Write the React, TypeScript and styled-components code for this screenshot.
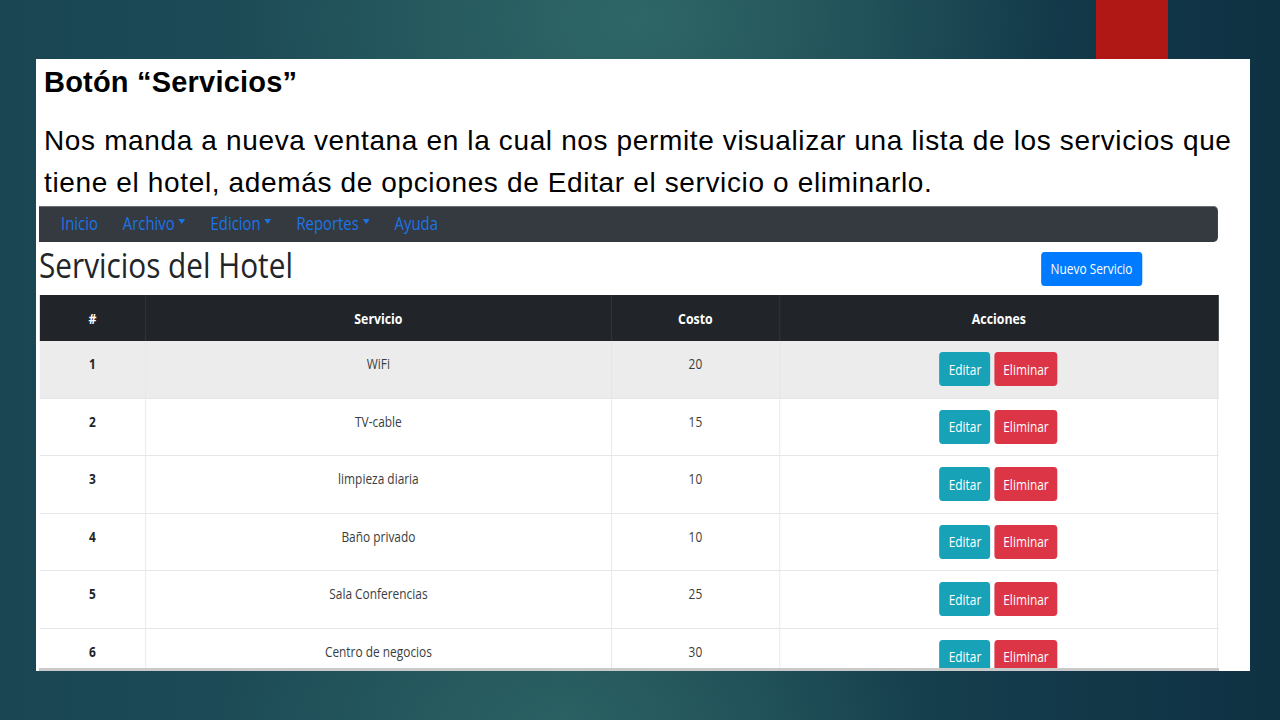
import React from 'react';
import styled, { createGlobalStyle } from 'styled-components';

const GlobalStyle = createGlobalStyle`
  html, body {
    margin: 0;
    padding: 0;
    width: 1280px;
    height: 720px;
    overflow: hidden;
  }
  * {
    box-sizing: border-box;
  }
`;

// the embedded capture is squeezed horizontally in the slide
const SQUEEZE = 0.85;
const sx = (v: number) => `${(v / SQUEEZE).toFixed(2)}px`;

interface Servicio {
  id: number;
  nombre: string;
  costo: number;
}

const servicios: Servicio[] = [
  { id: 1, nombre: 'WiFi', costo: 20 },
  { id: 2, nombre: 'TV-cable', costo: 15 },
  { id: 3, nombre: 'limpieza diaria', costo: 10 },
  { id: 4, nombre: 'Baño privado', costo: 10 },
  { id: 5, nombre: 'Sala Conferencias', costo: 25 },
  { id: 6, nombre: 'Centro de negocios', costo: 30 }
];

const navItems = [
  { label: 'Inicio', dropdown: false },
  { label: 'Archivo', dropdown: true },
  { label: 'Edicion', dropdown: true },
  { label: 'Reportes', dropdown: true },
  { label: 'Ayuda', dropdown: false }
];

const App: React.FC = () => {
  return (
    <Slide>
      <GlobalStyle />
      <RedAccent />
      <Panel>
        <SlideText>
          <SlideHeading>Botón “Servicios”</SlideHeading>
          <SlideParagraph>
            Nos manda a nueva ventana en la cual nos permite visualizar una lista de los servicios que
            <br />
            tiene el hotel, además de opciones de Editar el servicio o eliminarlo.
          </SlideParagraph>
        </SlideText>

        <Capture>
          <Page>
            <Navbar>
              {navItems.map(item => (
                <NavLink key={item.label}>
                  {item.label}
                  {item.dropdown && <Caret />}
                </NavLink>
              ))}
            </Navbar>

            <TitleRow>
              <PageTitle>Servicios del Hotel</PageTitle>
              <PrimaryButton>Nuevo Servicio</PrimaryButton>
            </TitleRow>

            <Table>
              <HeadRow>
                <HeadCell>#</HeadCell>
                <HeadCell>Servicio</HeadCell>
                <HeadCell>Costo</HeadCell>
                <HeadCell>Acciones</HeadCell>
              </HeadRow>
              {servicios.map((s, i) => (
                <BodyRow key={s.id} highlighted={i === 0}>
                  <Cell bold>{s.id}</Cell>
                  <Cell>{s.nombre}</Cell>
                  <Cell>{s.costo}</Cell>
                  <ActionCell>
                    <ActionButton variant="info">Editar</ActionButton>
                    <ActionButton variant="danger">Eliminar</ActionButton>
                  </ActionCell>
                </BodyRow>
              ))}
            </Table>
          </Page>
        </Capture>
      </Panel>
    </Slide>
  );
};

export default App;

const Slide = styled.div`
  position: relative;
  width: 1280px;
  height: 720px;
  padding: 59px 30px 0 36px;
  background-color: #16404e;
  background-image: radial-gradient(ellipse 420px 260px at 640px 20px, rgba(52, 110, 108, 0.75), rgba(52, 110, 108, 0) 100%),
    radial-gradient(ellipse 360px 160px at 560px 720px, rgba(48, 104, 104, 0.7), rgba(48, 104, 104, 0) 100%),
    linear-gradient(90deg, #1a4654 0%, #1f5058 45%, #133a4a 80%, #0f3243 100%);
`;

const RedAccent = styled.div`
  position: absolute;
  top: 0;
  left: 1096px;
  width: 72px;
  height: 59px;
  background: #b01816;
`;

const Panel = styled.div`
  width: 1214px;
  height: 612px;
  background: #ffffff;
  display: flex;
  flex-direction: column;
  overflow: hidden;
`;

const SlideText = styled.div`
  padding: 6px 0 0 8px;
  font-family: 'Liberation Sans', Arial, sans-serif;
  color: #000000;
  white-space: nowrap;
`;

const SlideHeading = styled.div`
  font-size: 29px;
  font-weight: bold;
  line-height: 34px;
  letter-spacing: 0.2px;
  margin-bottom: 21px;
`;

const SlideParagraph = styled.div`
  font-size: 28px;
  line-height: 42px;
  letter-spacing: 0.64px;
`;

const Capture = styled.div`
  margin: 2px 0 0 3px;
  width: 1180px;
  flex: 1;
  overflow: hidden;
  border-bottom: 3px solid #c9c9c9;
`;

const Page = styled.div`
  width: ${sx(1180)};
  transform: scaleX(${SQUEEZE});
  transform-origin: 0 0;
  font-family: 'Open Sans', 'Noto Sans', sans-serif;
  color: #212529;
`;

const Navbar = styled.nav`
  height: 36px;
  width: ${sx(1179)};
  background: #343a40;
  border-radius: 0 5px 5px 0;
  border-top: 1px solid #6c7075;
  display: flex;
  align-items: center;
  padding: 0 0 3px ${sx(22)};
  gap: ${sx(25)};
`;

const NavLink = styled.span`
  color: #1c74e6;
  font-size: 17.5px;
  display: inline-flex;
  align-items: center;
  gap: ${sx(4)};
`;

const Caret = styled.span`
  width: 0;
  height: 0;
  border-left: ${sx(4)} solid transparent;
  border-right: ${sx(4)} solid transparent;
  border-top: 5px solid #1c74e6;
  margin-top: -4px;
`;

const TitleRow = styled.div`
  height: 53px;
  display: flex;
  align-items: center;
  justify-content: space-between;
  padding-right: ${sx(77)};
`;

const PageTitle = styled.h1`
  margin: 0 0 8px;
  font-size: 35px;
  font-weight: 400;
  line-height: 40px;
  color: #212529;
`;

const PrimaryButton = styled.button`
  width: ${sx(101)};
  height: 34px;
  border: none;
  border-radius: 4px;
  background: #007bff;
  color: #ffffff;
  font-family: inherit;
  font-size: 14px;
  padding: 0;
`;

const columns = `${sx(105)} ${sx(466)} ${sx(168)} ${sx(439)}`;

const Table = styled.div`
  display: flex;
  flex-direction: column;
  margin-left: ${sx(1)};
`;

const HeadRow = styled.div`
  display: grid;
  grid-template-columns: ${columns};
  height: 46px;
  background: #212529;
`;

const HeadCell = styled.div`
  display: flex;
  align-items: center;
  justify-content: center;
  color: #ffffff;
  font-weight: bold;
  font-size: 14.5px;
  border-left: 1px solid #32383e;

  &:first-child {
    border-left: none;
  }
`;

const BodyRow = styled.div<{ highlighted?: boolean }>`
  display: grid;
  grid-template-columns: ${columns};
  height: 57.5px;
  flex-shrink: 0;
  background: ${p => (p.highlighted ? '#ececec' : '#ffffff')};
  border-bottom: 1px solid #e4e6e8;
`;

const Cell = styled.div<{ bold?: boolean }>`
  text-align: center;
  padding-top: 11px;
  line-height: 24px;
  font-size: 14px;
  font-weight: ${p => (p.bold ? 'bold' : 'normal')};
  color: ${p => (p.bold ? '#212529' : '#3a3d40')};
  border-left: 1px solid #e4e6e8;

  &:first-child {
    border-left: none;
  }
`;

const ActionCell = styled.div`
  display: flex;
  justify-content: center;
  align-items: flex-start;
  gap: ${sx(4)};
  padding-top: 11px;
  border-left: 1px solid #e4e6e8;
  border-right: 1px solid #e4e6e8;
`;

const ActionButton = styled.button<{ variant: 'info' | 'danger' }>`
  height: 34px;
  width: ${p => (p.variant === 'info' ? sx(51) : sx(63))};
  padding: 0;
  border: none;
  border-radius: 4px;
  background: ${p => (p.variant === 'info' ? '#17a2b8' : '#dc3545')};
  color: #ffffff;
  font-family: inherit;
  font-size: 14px;
`;
